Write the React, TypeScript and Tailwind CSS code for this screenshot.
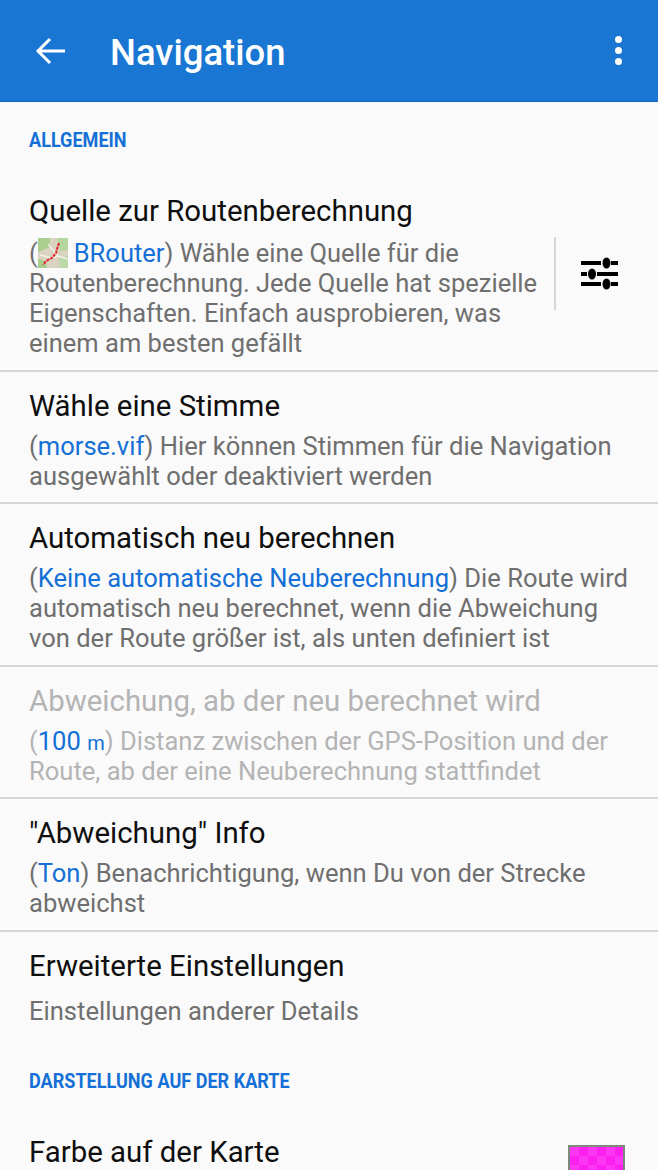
import { ReactNode } from 'react'

function Blue({ children }: { children: ReactNode }) {
  return <span className="text-[#1470d6]">{children}</span>
}

function SectionLabel({ children, className }: { children: string; className: string }) {
  return (
    <div className={`text-[21px] leading-[24px] font-bold text-[#1470d6] origin-left scale-x-[0.86] whitespace-nowrap ${className}`}>
      {children}
    </div>
  )
}

function Pref({ title, children, last, disabled }: { title: string; children: ReactNode; last?: boolean; disabled?: boolean }) {
  return (
    <div className={`pl-[29px] pr-[24px] pt-[16px] ${last ? '' : 'pb-[11.5px] border-b-2 border-[#d6d6d6]'}`}>
      <div className={`text-[29.4px] leading-[36px] whitespace-nowrap ${disabled ? 'text-[#b4b4b4]' : 'text-[#0f0f0f]'}`}>{title}</div>
      <div className={`mt-[7px] text-[25.55px] leading-[30px] ${disabled ? 'text-[#b4b4b4]' : 'text-[#6f6f6f]'}`}>{children}</div>
    </div>
  )
}

function MapThumb() {
  return (
    <svg width="30" height="30" viewBox="0 0 30 30" className="inline-block align-[-6px] mr-[6px]">
      <rect width="30" height="30" fill="#d9d3c0" />
      <path d="M0 0h12v9L0 14z" fill="#a9cf8e" />
      <path d="M19 0h11v12l-8 1z" fill="#b5d69c" />
      <path d="M0 21l8 2 1 7H0z" fill="#a9cf8e" />
      <path d="M21 20l9-2v12h-8z" fill="#bcd9a8" />
      <path d="M10 6l10 12 10 3M2 17l12 3 6-2" stroke="#f2f0e6" strokeWidth="1.5" fill="none" />
      <path d="M21 5l-2 6-1 4-4 5-6 3-3 4" stroke="#e3232c" strokeWidth="2" strokeDasharray="3 1" fill="none" />
    </svg>
  )
}

function SlidersIcon() {
  return (
    <svg width="37" height="33" viewBox="0 0 37 33" fill="#000" className="block">
      <rect x="0" y="4" width="20" height="4" />
      <rect x="30" y="4" width="7" height="4" />
      <ellipse cx="25.5" cy="6" rx="4" ry="5.5" />
      <rect x="0" y="15" width="6" height="4" />
      <rect x="16" y="15" width="21" height="4" />
      <ellipse cx="11" cy="17" rx="4" ry="5.5" />
      <rect x="0" y="25" width="20" height="4" />
      <rect x="30" y="25" width="7" height="4" />
      <ellipse cx="25.5" cy="27" rx="4" ry="5.5" />
    </svg>
  )
}

export default function App() {
  return (
    <div className="w-[658px] h-[1170px] overflow-hidden bg-[#fafafa] font-['Roboto',sans-serif]">
      {/* toolbar */}
      <div className="h-[102px] bg-[#1976d2] border-b border-[#1565c0] flex items-center text-white">
        <svg width="32" height="32" viewBox="0 0 32 32" className="ml-[35px]" fill="none" stroke="#fff" strokeWidth="3">
          <path d="M30 16H3M15 4L3 16l12 12" />
        </svg>
        <div className="ml-[43px] pt-[5px] text-[36.5px] font-medium flex-1">Navigation</div>
        <div className="mr-[36px] flex flex-col gap-[4px]">
          <div className="w-[7px] h-[7px] rounded-full bg-white" />
          <div className="w-[7px] h-[7px] rounded-full bg-white" />
          <div className="w-[7px] h-[7px] rounded-full bg-white" />
        </div>
      </div>

      <SectionLabel className="ml-[29px] mt-[26px]">ALLGEMEIN</SectionLabel>

      {/* first row has the settings button */}
      <div className="mt-[41px] pl-[29px] pb-[11.75px] border-b-2 border-[#d6d6d6] flex">
        <div className="w-[525px] shrink-0">
          <div className="text-[29.4px] leading-[36px] text-[#0f0f0f] whitespace-nowrap">Quelle zur Routenberechnung</div>
          <div className="mt-[9px] text-[25.5px] leading-[30px] text-[#6f6f6f] whitespace-nowrap">
            (<MapThumb /><Blue>BRouter</Blue>) Wähle eine Quelle für die
            <br />
            Routenberechnung. Jede Quelle hat spezielle
            <br />
            Eigenschaften. Einfach ausprobieren, was
            <br />
            einem am besten gefällt
          </div>
        </div>
        <div className="mt-[44px] h-[73px] border-l-2 border-[#d6d6d6] flex items-center pl-[25px]">
          <SlidersIcon />
        </div>
      </div>

      <Pref title="Wähle eine Stimme">
        (<Blue>morse.vif</Blue>) Hier können Stimmen für die Navigation ausgewählt oder deaktiviert werden
      </Pref>
      <Pref title="Automatisch neu berechnen">
        (<Blue>Keine automatische Neuberechnung</Blue>) Die Route wird automatisch neu berechnet, wenn die Abweichung von der Route größer ist, als unten definiert ist
      </Pref>
      <Pref title="Abweichung, ab der neu berechnet wird" disabled>
        (<Blue>100 <span className="text-[20px] leading-[0]">m</span></Blue>) Distanz zwischen der GPS-Position und der Route, ab der eine Neuberechnung stattfindet
      </Pref>
      <Pref title={'"Abweichung" Info'}>
        (<Blue>Ton</Blue>) Benachrichtigung, wenn Du von der Strecke abweichst
      </Pref>
      <Pref title="Erweiterte Einstellungen" last>
        <span className="block mt-[12px]">Einstellungen anderer Details</span>
      </Pref>

      <SectionLabel className="ml-[29px] mt-[43px]">DARSTELLUNG AUF DER KARTE</SectionLabel>

      <div className="mt-[41px] pl-[29px] flex justify-between items-start">
        <div className="text-[29.4px] leading-[36px] text-[#0f0f0f]">Farbe auf der Karte</div>
        <svg width="57" height="40" className="mr-[33px] mt-[11px]">
          <defs>
            <pattern id="check" width="18" height="18" patternUnits="userSpaceOnUse" x="2" y="2">
              <rect width="18" height="18" fill="#fb1ff0" />
              <rect width="9" height="9" fill="#fd35f5" />
              <rect x="9" y="9" width="9" height="9" fill="#fd35f5" />
            </pattern>
          </defs>
          <rect x="1" y="1" width="55" height="60" fill="url(#check)" stroke="#7c8a7c" strokeWidth="2" />
        </svg>
      </div>
    </div>
  )
}
